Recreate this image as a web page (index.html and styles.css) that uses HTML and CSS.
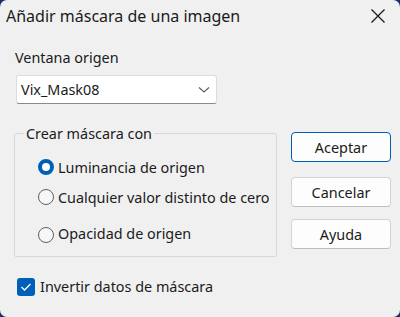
FILE: index.html
```html
<!DOCTYPE html>
<html lang="es">
<head>
    <meta charset="UTF-8">
    <title>Añadir máscara de una imagen</title>
    <link rel="stylesheet" href="styles.css">
</head>
<body>
    <div class="window">
        <div class="titlebar">
            <span class="title">Añadir máscara de una imagen</span>
            <svg class="close" width="16" height="16" viewBox="0 0 16 16">
                <path d="M1.5 1.5 L14.5 14.5 M14.5 1.5 L1.5 14.5" stroke="#1a1a1a" stroke-width="1.3" fill="none"/>
            </svg>
        </div>
        <div class="content">
            <div class="left">
                <label class="field-label" for="source">Ventana origen</label>
                <div class="select" id="source">
                    <span>Vix_Mask08</span>
                    <svg width="12" height="8" viewBox="0 0 12 8">
                        <path d="M1 1.5 L6 6 L11 1.5" stroke="#606060" stroke-width="1.1" fill="none"/>
                    </svg>
                </div>
                <fieldset class="group">
                    <legend>Crear máscara con</legend>
                    <div class="radio checked"><span class="dot"></span>Luminancia de origen</div>
                    <div class="radio"><span class="dot"></span>Cualquier valor distinto de cero</div>
                    <div class="radio last"><span class="dot"></span>Opacidad de origen</div>
                </fieldset>
                <div class="check">
                    <span class="box">
                        <svg width="12" height="10" viewBox="0 0 12 10">
                            <path d="M1.5 5 L4.5 8 L10.5 2" stroke="#fff" stroke-width="1.3" fill="none"/>
                        </svg>
                    </span>
                    Invertir datos de máscara
                </div>
            </div>
            <div class="buttons">
                <button class="default">Aceptar</button>
                <button class="cancel">Cancelar</button>
                <button>Ayuda</button>
            </div>
        </div>
    </div>
</body>
</html>
```

FILE: styles.css
```css
body {
    margin: 0;
    background: #1c2f6b;
    font-family: "Noto Sans", "Open Sans", sans-serif;
    color: #1b1b1b;
}
.window {
    width: 400px;
    height: 317px;
    background: #f0f0f0;
    border-radius: 7px;
    overflow: hidden;
}
.titlebar {
    height: 32px;
    display: flex;
    align-items: center;
    justify-content: space-between;
    padding: 0 14px 0 6px;
}
.title {
    font-size: 16px;
}
.close {
    display: block;
}
.content {
    display: flex;
    padding: 16px 9px 0 14px;
}
.left {
    width: 263px;
}
.field-label {
    display: block;
    font-size: 14.4px;
    margin-left: 1px;
    margin-bottom: 8px;
}
.select {
    width: 189px;
    height: 27px;
    margin-left: 2px;
    background: #fff;
    border: 1px solid #dcdcdc;
    border-bottom-color: #8a8a8a;
    border-radius: 3px;
    display: flex;
    align-items: center;
    justify-content: space-between;
    padding: 0 6px 0 4px;
    font-size: 14.4px;
}
.group {
    margin: 20px 0 0 0;
    padding: 9px 0 10px 23px;
    border: 1px solid #d8d8d8;
    border-radius: 2px;
}
.group legend {
    font-size: 14.4px;
    padding: 0 2px;
    margin-left: -14px;
}
.radio {
    display: flex;
    align-items: center;
    font-size: 14.4px;
    height: 30px;
}
.radio.last {
    height: 34px;
    align-items: flex-end;
    padding-bottom: 3px;
    box-sizing: border-box;
}
.dot {
    width: 16px;
    height: 16px;
    flex-shrink: 0;
    box-sizing: border-box;
    border: 1px solid #5f5f5f;
    border-radius: 50%;
    margin-right: 4px;
    background: #f7f7f7;
}
.checked .dot {
    border: 4px solid #005fb8;
    background: #fff;
}
.check {
    display: flex;
    align-items: center;
    font-size: 14.4px;
    margin-top: 20px;
    margin-left: 3px;
}
.box {
    width: 18px;
    height: 18px;
    border-radius: 3px;
    background: #005fb8;
    display: flex;
    align-items: center;
    justify-content: center;
    margin-right: 5px;
}
.buttons {
    display: flex;
    flex-direction: column;
    gap: 15px;
    margin-left: 14px;
    margin-top: 84px;
}
button {
    width: 100px;
    height: 30px;
    font-family: inherit;
    font-size: 14.4px;
    color: #1b1b1b;
    background: #fdfdfd;
    border: 1px solid #d4d4d4;
    border-bottom-color: #bdbdbd;
    border-radius: 4px;
}
button.default {
    border: 1px solid #005fb8;
}
button.cancel {
    margin-bottom: -3px;
}
```
